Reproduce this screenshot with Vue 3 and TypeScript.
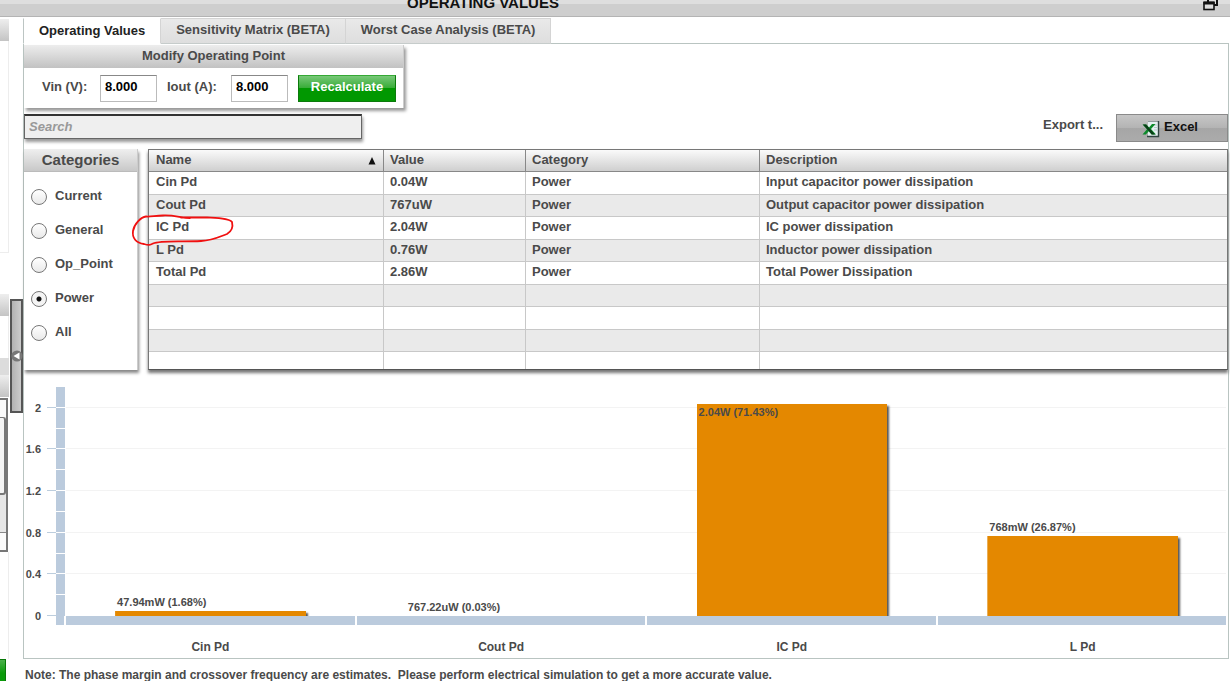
<script setup lang="ts">
import { computed, ref } from 'vue'

interface Row { name: string; value: string; category: string; description: string }
interface Bar { name: string; watts: number; label: string }

const tabs = ['Operating Values', 'Sensitivity Matrix (BETA)', 'Worst Case Analysis (BETA)']
const activeTab = ref(tabs[0])
const vin = ref('8.000')
const iout = ref('8.000')
const search = ref('')
const categories = ['Current', 'General', 'Op_Point', 'Power', 'All']
const category = ref('Power')

const rows: Row[] = [
  { name: 'Cin Pd', value: '0.04W', category: 'Power', description: 'Input capacitor power dissipation' },
  { name: 'Cout Pd', value: '767uW', category: 'Power', description: 'Output capacitor power dissipation' },
  { name: 'IC Pd', value: '2.04W', category: 'Power', description: 'IC power dissipation' },
  { name: 'L Pd', value: '0.76W', category: 'Power', description: 'Inductor power dissipation' },
  { name: 'Total Pd', value: '2.86W', category: 'Power', description: 'Total Power Dissipation' },
]
const blankRows = 4

const axisMax = 2.2
const majors = [2, 1.6, 1.2, 0.8, 0.4, 0]
const minors = [1.8, 1.4, 1, 0.6, 0.2]
const bars: Bar[] = [
  { name: 'Cin Pd', watts: 0.04794, label: '47.94mW (1.68%)' },
  { name: 'Cout Pd', watts: 0.00076722, label: '767.22uW (0.03%)' },
  { name: 'IC Pd', watts: 2.04, label: '2.04W (71.43%)' },
  { name: 'L Pd', watts: 0.768, label: '768mW (26.87%)' },
]
const pct = (v: number) => `${(v / axisMax) * 100}%`
const allTicks = computed(() => [...majors.slice(0, -1), ...minors])
</script>

<template>
  <div class="app">
    <header class="titlebar">
      <h1>OPERATING VALUES</h1>
      <button class="restore" aria-label="Restore panel">
        <svg width="16" height="12" viewBox="0 0 16 12">
          <path d="M5 0V3M4 1H6M14 0V6H11" fill="none" stroke="#111" stroke-width="2" />
          <rect x="1" y="3.5" width="10" height="7" fill="#ddd" stroke="#111" stroke-width="1.6" />
          <path d="M0.5 4H11.5" stroke="#111" stroke-width="3" />
        </svg>
      </button>
    </header>

    <div class="body">
      <aside class="sliver">
        <div class="s-head"></div>
        <div class="s-panel"></div>
        <div class="s-gap"></div>
        <div class="s-head"></div>
        <div class="s-white"></div>
        <div class="s-grey"></div>
        <div class="s-head"></div>
        <div class="s-scroll"><i class="s-arrow"></i><i class="s-thumb"></i><i class="s-track"></i><i class="s-arrow"></i></div>
        <div class="s-rest"></div>
        <div class="s-green"></div>
      </aside>

      <div class="split">
        <button class="handle" aria-label="Collapse left panel">
          <svg width="12" height="14" viewBox="0 0 12 14">
            <circle cx="6" cy="7" r="5.6" fill="#777" />
            <path d="M8.5 3.5V10.5L2.5 7Z" fill="#fff" />
          </svg>
        </button>
      </div>

      <main class="main">
        <nav class="tabs">
          <button v-for="t in tabs" :key="t" :class="['tab', { active: t === activeTab }]" @click="activeTab = t">{{ t }}</button>
        </nav>

        <section class="panel">
          <form class="modify" @submit.prevent>
            <h2>Modify Operating Point</h2>
            <div class="fields">
              <label for="vin">Vin (V):</label>
              <input id="vin" v-model="vin" type="text" />
              <label for="iout">Iout (A):</label>
              <input id="iout" v-model="iout" type="text" />
              <button class="go" type="submit">Recalculate</button>
            </div>
          </form>

          <div class="tools">
            <input v-model="search" class="search" type="text" placeholder="Search" aria-label="Search" />
            <div class="export">
              <span>Export t...</span>
              <button class="excel">
                <svg width="18" height="18" viewBox="0 0 18 18">
                  <path d="M6 1.5H17V16.5H6Z" fill="#e4eff0" />
                  <path d="M6 1.5H16.5" stroke="#8f9c9c" />
                  <path d="M16.5 1V16.5H5" fill="none" stroke="#2f4440" stroke-width="1.4" />
                  <path d="M12 5H15M12 7.5H15M12 10H15" stroke="#b4cacc" />
                  <path d="M0.5 4.5H4.5L7 7.5L10 4H13.5L9 9L14 14.5H9.5L6.8 11.3L3.8 14.5H0.5L5 9.3Z" fill="#0b8a2a" />
                  <path d="M1 4.5L9.8 14.5H13L4 4.5Z" fill="#0a3d17" />
                </svg>
                Excel
              </button>
            </div>
          </div>

          <div class="data">
            <fieldset class="cats">
              <legend>Categories</legend>
              <label v-for="c in categories" :key="c">
                <input v-model="category" type="radio" name="category" :value="c" />
                <span>{{ c }}</span>
              </label>
            </fieldset>

            <div class="grid">
              <table>
                <colgroup><col class="c1" /><col class="c2" /><col class="c3" /><col /></colgroup>
                <thead>
                  <tr>
                    <th>
                      <div class="sorted">Name
                        <svg width="8" height="8" viewBox="0 0 8 8"><path d="M4 0L7.5 7.5H0.5Z" fill="#111" /></svg>
                      </div>
                    </th>
                    <th>Value</th><th>Category</th><th>Description</th>
                  </tr>
                </thead>
                <tbody>
                  <tr v-for="r in rows" :key="r.name">
                    <td>{{ r.name }}</td><td>{{ r.value }}</td><td>{{ r.category }}</td><td>{{ r.description }}</td>
                  </tr>
                  <tr v-for="n in blankRows" :key="n"><td></td><td></td><td></td><td></td></tr>
                </tbody>
              </table>
              <svg class="mark" width="106" height="34" viewBox="0 0 106 34">
                <path d="M59 4C50 4 44 1 32 1.500C23 2 18 3 15 2.500C10 3 3 10 2 17C1 24 5 29 13 30C18 31.500 19 31 22 29.500C30 26 48 28 70 27C82 26.500 90 22 96 20C101 17 102 12 101 8C98 4 85 4 76 3.500L50 3.500" fill="none" stroke="#f01010" stroke-width="1.8" stroke-linecap="round" />
              </svg>
            </div>
          </div>

          <div class="chart">
            <div class="yaxis">
              <div class="ylabels">
                <span v-for="m in majors" :key="m" :style="{ bottom: pct(m) }">{{ m }}</span>
              </div>
              <div class="yticks"><i v-for="m in majors" :key="m" :style="{ bottom: pct(m) }"></i></div>
              <div class="yband"><i v-for="m in allTicks" :key="m" :style="{ bottom: pct(m) }"></i></div>
            </div>
            <div class="plot">
              <i v-for="m in majors.slice(0, -1)" :key="m" class="line" :style="{ bottom: pct(m) }"></i>
              <div v-for="b in bars" :key="b.name" class="slot">
                <div :class="['bar', { tall: b.watts > 2, flat: b.watts < 0.01 }]" :style="{ height: pct(b.watts) }">
                  <span>{{ b.label }}</span>
                </div>
              </div>
            </div>
            <div class="corner"><i></i></div>
            <div class="xband"><i v-for="b in bars" :key="b.name"></i></div>
            <div></div>
            <div class="xlabels"><span v-for="b in bars" :key="b.name">{{ b.name }}</span></div>
          </div>
        </section>

        <p class="note">Note: The phase margin and crossover frequency are estimates.&nbsp; Please perform electrical simulation to get a more accurate value.</p>
      </main>
    </div>
  </div>
</template>

<style>
body { margin: 0; background: #fff; }
</style>

<style scoped>
.app, .app * { box-sizing: border-box; }
.app {
  height: 100vh;
  overflow: hidden;
  display: flex;
  flex-direction: column;
  font: bold 13px/16px "Liberation Sans", Arial, sans-serif;
  color: #4a4a4a;
}
button, input { font: inherit; color: inherit; margin: 0; border-radius: 0; }
button { cursor: pointer; padding: 0; }

.titlebar {
  flex: none;
  height: 17px;
  display: flex;
  align-items: flex-end;
  justify-content: space-between;
  padding: 0 11px 5px 407px;
  background: linear-gradient(#dedede 0 4px, #cecece 4px);
  border-bottom: 1px solid #b4b4b4;
}
.titlebar h1 { margin: 0; font-size: 15px; line-height: 16px; color: #111; white-space: nowrap; }
.restore { border: 0; background: none; height: 12px; display: flex; }

.body { flex: 1; min-height: 0; display: flex; }
.sliver { flex: none; width: 9px; padding-top: 2px; display: flex; flex-direction: column; }
.sliver > div { flex: none; }
.s-head { height: 22px; background: linear-gradient(#eee, #c4c4c4); }
.s-panel { height: 212px; border-right: 1px solid #ededed; border-bottom: 1px solid #ededed; }
.s-gap { height: 41px; }
.s-white { height: 42px; border-right: 1px solid #ededed; }
.s-grey { height: 17px; background: #dcdcdc; }
.s-scroll {
  height: 154px;
  width: 8px;
  margin-top: 1px;
  display: flex;
  flex-direction: column;
  border: 2px solid #777;
  border-left: 0;
  background: #e6e6e6;
}
.s-arrow { height: 17px; background: #fafafa; }
.s-thumb { height: 78px; background: #f4f4f4; border: 1px solid #777; border-width: 1px 2px 2px 0; border-radius: 0 3px 3px 0; }
.s-track { flex: 1; border-bottom: 1px solid #888; }
.s-rest { height: 107px; border-right: 1px solid #ededed; }
.s-green { height: 24px; width: 6px; background: linear-gradient(#4bb04b, #0a9a0a 60%); border: 1px solid #087808; border-left: 0; }

.split { flex: none; width: 14px; padding: 282px 0 0 1px; }
.handle {
  width: 13px;
  height: 114px;
  border: 2px solid #555;
  background: linear-gradient(90deg, #b2b2b2, #ccc);
  display: flex;
  align-items: center;
  justify-content: center;
}
.handle svg { flex: none; }

.main { flex: 1; min-width: 0; padding: 1px 1px 0 0; }
.tabs { display: flex; height: 26px; }
.tab {
  border: 1px solid #d4d4d4;
  border-left-width: 0;
  border-bottom-color: #c6cccb;
  background: linear-gradient(#e9e9e9, #dedede);
  padding: 0 15px 3px;
  white-space: nowrap;
}
.tab.active { background: #fff; border-width: 1px; border-color: #fff #d4d4d4 #fff #bcc5c3; color: #222; padding-bottom: 1px; }

.panel { border: 1px solid #b9c4c1; margin-top: -1px; padding-bottom: 4px; }
.modify { width: 380px; margin-top: 1px; background: #fff; border-right: 1px solid #ccc; box-shadow: 2px 3px 3px #999; }
.modify h2 {
  margin: 0;
  height: 23px;
  font-size: 13px;
  line-height: 22px;
  text-align: center;
  background: linear-gradient(#ededed, #c2c2c2);
}
.fields { display: grid; grid-template-columns: 48px 57px 54px 57px 98px; align-items: center; gap: 10px; height: 40px; padding-left: 18px; }
.fields label { white-space: nowrap; padding-bottom: 3px; }
.fields input {
  height: 27px;
  border: 1px solid #bbb;
  border-top-color: #888;
  padding: 0 4px 3px;
  color: #000;
  background: #fff;
}
.go {
  height: 27px;
  border: 1px solid #0b7a0b;
  border-top-color: #35a835;
  background: linear-gradient(#78c878, #3aad3a 46%, #019801 50%, #019801);
  color: #fff;
  padding-bottom: 3px;
}

.tools { display: flex; justify-content: space-between; padding-top: 6px; height: 41px; }
.search {
  width: 338px;
  height: 25px;
  border: 1px solid #666;
  border-top: 2px solid #333;
  background: #efefef;
  padding: 0 4px 2px;
  color: #333;
  box-shadow: 1px 3px 3px #999;
}
.search::placeholder { color: #999; font-style: italic; opacity: 1; }
.export { display: flex; gap: 13px; line-height: 22px; }
.excel {
  width: 112px;
  height: 28px;
  border: 1px solid #8a8a8a;
  background: linear-gradient(#c6c6c6, #b4b4b4 48%, #a6a6a6 52%, #ababab);
  color: #111;
  display: flex;
  align-items: center;
  justify-content: center;
  gap: 4px;
  padding: 0 4px 2px 0;
}
.excel svg { margin-top: 3px; }

.data { display: flex; gap: 10px; height: 221px; }
.cats {
  flex: none;
  width: 114px;
  min-width: 0;
  margin: 0;
  padding: 0 0 0 7px;
  border: 0;
  border-right: 1px solid #ccc;
  box-shadow: 1px 3px 3px #888;
}
.cats legend {
  float: left;
  width: 113px;
  height: 23px;
  margin: 0 0 8px -7px;
  padding: 0;
  border-bottom: 1px solid #bbb;
  font-size: 15px;
  line-height: 21px;
  text-align: center;
  background: linear-gradient(#efefef, #c8c8c8);
}
.cats label { clear: both; display: flex; align-items: center; gap: 8px; height: 34px; width: 100%; }
.cats span { padding-bottom: 3px; }
.cats input {
  appearance: none;
  width: 16px;
  height: 16px;
  border: 1px solid #777;
  border-radius: 50%;
  background: linear-gradient(#fff, #e9e9e9);
}
.cats input:checked { background: radial-gradient(circle, #111 0 2px, #f4f4f4 3px); }

.grid { position: relative; flex: 1; min-width: 0; border: 1px solid #777; border-bottom-color: #555; box-shadow: 0 3px 3px #777; }
table { width: 100%; table-layout: fixed; border-collapse: separate; border-spacing: 0; }
.c1 { width: 235px; }
.c2 { width: 142px; }
.c3 { width: 234px; }
th, td { text-align: left; padding: 1px 7px 0; line-height: 18px; vertical-align: top; border-right: 1px solid #c8c8c8; border-bottom: 1px solid #c8c8c8; white-space: nowrap; }
td + td, th + th { padding-left: 6px; }
th:last-child, td:last-child { border-right: 0; }
th { height: 22px; padding-top: 0; line-height: 19px; border-color: #888; background: linear-gradient(#fafafa, #cfcfcf); }
tbody tr:nth-child(odd) { height: 23px; }
tbody tr:nth-child(even) { height: 22px; background: #eaeaea; }
tbody tr:last-child { height: 17px; }
tbody tr:last-child td { border-bottom: 0; }
.sorted { display: flex; justify-content: space-between; align-items: center; }
.sorted svg { margin-top: 3px; }
.mark { position: absolute; left: -18px; top: 64px; }

.chart { display: grid; grid-template-columns: 42px 1fr; margin-top: 17px; font-size: 12px; }
.yaxis { display: flex; height: 229px; }
.ylabels, .yticks, .yband { position: relative; }
.ylabels { width: 17px; font-size: 11px; line-height: 16px; }
.ylabels span { position: absolute; right: 0; transform: translateY(50%); }
.yticks { width: 9px; margin-left: 6px; }
.yticks i { position: absolute; left: 0; right: 0; height: 1px; background: #bccddd; }
.yband { width: 9px; background: #bbcbdd; }
.yband i { position: absolute; left: 0; right: 0; height: 1px; background: #fff; }
.plot { position: relative; display: flex; gap: 2px; align-items: flex-end; padding-right: 1px; }
.line { position: absolute; left: 0; right: 2px; height: 1px; background: #f3f3f3; }
.slot { position: relative; flex: 1; height: 100%; display: flex; align-items: flex-end; justify-content: center; }
.bar { position: relative; width: 66%; background: #e48800; box-shadow: 2px 2px 2px #555; clip-path: inset(-30px -6px 0 0); }
.bar span { position: absolute; left: 2px; bottom: 100%; font-size: 11px; line-height: 16px; padding-bottom: 1px; white-space: nowrap; }
.bar.tall span { bottom: auto; top: 0; }
.bar.flat { box-shadow: none; background: none; }
.corner { padding: 0 0 0 32px; height: 9px; }
.corner i { display: block; width: 8px; height: 9px; background: #bbcbdd; }
.xband { display: flex; gap: 2px; padding-right: 2px; height: 9px; }
.xband i { flex: 1; background: #bbcbdd; }
.xlabels { display: flex; gap: 2px; padding: 14px 1px 0 0; line-height: 16px; }
.xlabels span { flex: 1; text-align: center; }
.panel { padding-bottom: 3px; }

.note { margin: 8px 0 0 2px; font-size: 12px; line-height: 16px; white-space: nowrap; }
</style>
